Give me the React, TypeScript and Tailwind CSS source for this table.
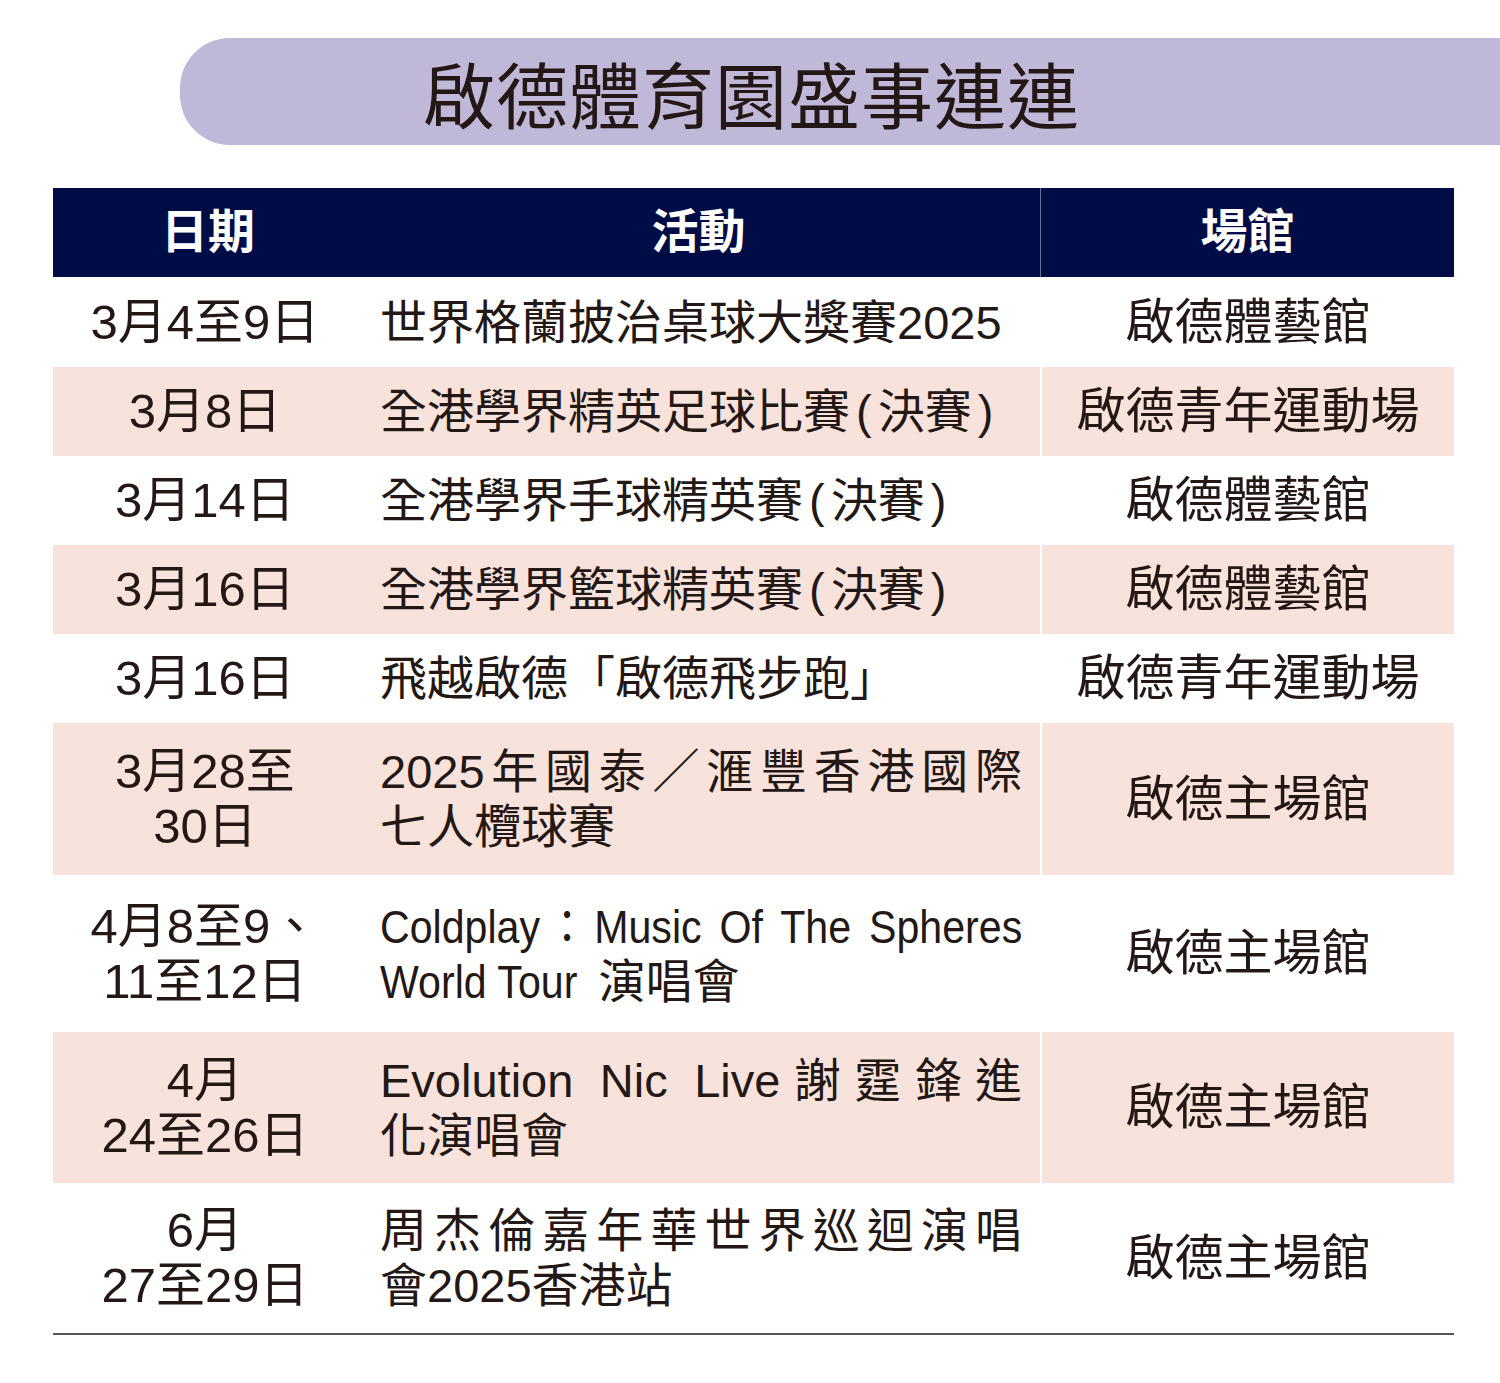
import React from "react";

type Row = {
  date: string[];
  act: React.ReactNode[];
  venue: string;
  h: string;
  pink: boolean;
  custom?: boolean;
};

const P = ({ c }: { c: string }) => <span className="mx-[6px]">{c}</span>;

const rows: Row[] = [
  { date: ["3月4至9日"], act: ["世界格蘭披治桌球大獎賽2025"], venue: "啟德體藝館", h: "h-[90px]", pink: false },
  {
    date: ["3月8日"],
    act: [<>全港學界精英足球比賽<P c="(" />決賽<P c=")" /></>],
    venue: "啟德青年運動場",
    h: "h-[89px]",
    pink: true,
  },
  {
    date: ["3月14日"],
    act: [<>全港學界手球精英賽<P c="(" />決賽<P c=")" /></>],
    venue: "啟德體藝館",
    h: "h-[89px]",
    pink: false,
  },
  {
    date: ["3月16日"],
    act: [<>全港學界籃球精英賽<P c="(" />決賽<P c=")" /></>],
    venue: "啟德體藝館",
    h: "h-[89px]",
    pink: true,
  },
  { date: ["3月16日"], act: ["飛越啟德「啟德飛步跑」"], venue: "啟德青年運動場", h: "h-[89px]", pink: false },
  { date: ["3月28至", "30日"], act: ["2025年國泰／滙豐香港國際", "七人欖球賽"], venue: "啟德主場館", h: "h-[152px]", pink: true },
  {
    date: ["4月8至9、", "11至12日"],
    act: [],
    venue: "啟德主場館",
    h: "h-[157px]",
    pink: false,
    custom: true,
  },
  { date: ["4月", "24至26日"], act: ["Evolution Nic Live謝霆鋒進", "化演唱會"], venue: "啟德主場館", h: "h-[151px]", pink: true },
  { date: ["6月", "27至29日"], act: ["周杰倫嘉年華世界巡迴演唱", "會2025香港站"], venue: "啟德主場館", h: "h-[150px]", pink: false },
];

function Coldplay() {
  return (
    <>
      <div className="w-[642px] h-[55px] whitespace-nowrap">
        <div className="w-[734px] origin-left scale-x-[0.875] text-justify [text-align-last:justify] whitespace-nowrap">
          Coldplay：Music Of The Spheres
        </div>
      </div>
      <div className="whitespace-nowrap">
        <span className="inline-block origin-left scale-x-[0.875] mr-[-20px]">World Tour</span> 演唱會
      </div>
    </>
  );
}

export default function App() {
  return (
    <div
      className="w-[1500px] h-[1383px] bg-white text-[#231815] overflow-hidden"
      style={{ fontFamily: '"Liberation Sans", "Noto Sans CJK TC", sans-serif' }}
    >
      <div className="pt-[38px] pl-[180px]">
        <div className="h-[107px] bg-[#bfb8d8] rounded-l-[50px] flex items-center pl-[243px]">
          <span className="text-[72px] leading-none tracking-[1px]" style={{ fontFamily: '"Noto Sans CJK TC", sans-serif' }}>
            啟德體育園盛事連連
          </span>
        </div>
      </div>

      <div className="mt-[43px] mx-[53px] w-[1401px]">
        <div className="flex h-[89px] bg-[#000c45] text-white font-bold text-[47px]">
          <div className="w-[304px] flex items-center justify-center pl-[6px]">日期</div>
          <div className="w-[683px] flex items-center justify-center">活動</div>
          <div className="w-[1px] bg-[#6b7096]" />
          <div className="flex-1 flex items-center justify-center">場館</div>
        </div>

        {rows.map((r, i) => (
          <div key={i} className={`flex ${r.h} ${r.pink ? "bg-[#f8e3dc]" : "bg-white"} text-[47px] leading-[55px]`}>
            <div className="w-[304px] flex flex-col items-center justify-center text-[49px]">
              {r.date.map((d, j) => (
                <div key={j}>{d}</div>
              ))}
            </div>
            <div className="w-[683px] flex flex-col justify-center pl-[23px] pr-[18px]">
              {r.custom ? (
                <Coldplay />
              ) : (
                r.act.map((a, j) => {
                  const justify = r.act.length > 1 && j < r.act.length - 1;
                  return (
                    <div
                      key={j}
                      className={`whitespace-nowrap ${justify ? "text-justify [text-align-last:justify]" : ""}`}
                    >
                      {a}
                    </div>
                  );
                })
              )}
            </div>
            <div className={`w-[2px] ${r.pink ? "bg-white" : "bg-transparent"}`} />
            <div className="flex-1 flex items-center justify-center text-[49px]">{r.venue}</div>
          </div>
        ))}
        <div className="h-[2px] bg-[#595757]" />
      </div>
    </div>
  );
}
